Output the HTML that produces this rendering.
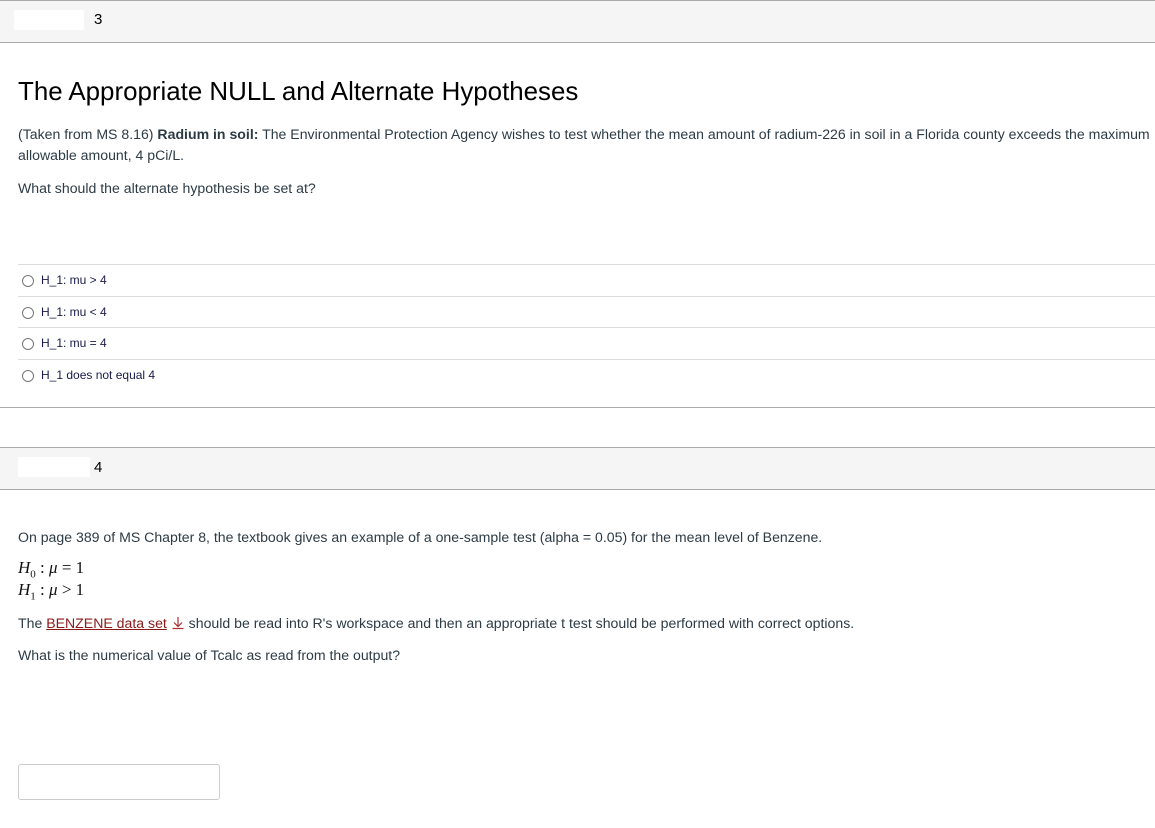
<!DOCTYPE html>
<html><head><meta charset="utf-8"><style>
body{margin:0;width:1155px;height:828px;background:#fff;font-family:"Liberation Sans",sans-serif;color:#2d3b45;position:relative;overflow:hidden}
.a{position:absolute;white-space:nowrap}
.hdr{position:absolute;left:0;width:1155px;height:41px;background:#f5f5f5;border-top:1px solid #aaa;border-bottom:1px solid #aaa}
.p{font-size:14.1px;color:#2d3b45}
.opt{position:absolute;left:18px;width:1137px;border-top:1px solid #ddd;height:31px}
.opt span.r{position:absolute;left:4px;top:10px;width:10px;height:10px;border:1px solid #777;border-radius:50%}
.opt span.t{position:absolute;left:23px;top:8px;font-size:12px;color:#1a1a4a}
.m{font-family:"Liberation Serif",serif;font-size:17px;color:#111}
</style></head><body>
<div class="hdr" style="top:0"></div>
<div class="a" style="left:14px;top:10px;width:70px;height:20px;background:#fff"></div>
<div class="a" style="left:94px;top:11px;font-size:15px;color:#000">3</div>
<div class="a" style="left:18px;top:78px;font-size:25.9px;color:#000">The Appropriate NULL and Alternate Hypotheses</div>
<div class="a p" style="left:18px;top:126px">(Taken from MS 8.16) <b>Radium in soil:</b> The Environmental Protection Agency wishes to test whether the mean amount of radium-226 in soil in a Florida county exceeds the maximum</div>
<div class="a p" style="left:18px;top:147px">allowable amount, 4 pCi/L.</div>
<div class="a p" style="left:18px;top:180px">What should the alternate hypothesis be set at?</div>
<div class="opt" style="top:264px"><span class="r"></span><span class="t">H_1: mu &gt; 4</span></div>
<div class="opt" style="top:296px"><span class="r"></span><span class="t">H_1: mu &lt; 4</span></div>
<div class="opt" style="top:327px"><span class="r"></span><span class="t">H_1: mu = 4</span></div>
<div class="opt" style="top:359px"><span class="r"></span><span class="t">H_1 does not equal 4</span></div>
<div class="a" style="left:0;top:407px;width:1155px;border-top:1px solid #aaa"></div>
<div class="hdr" style="top:447px"></div>
<div class="a" style="left:18px;top:457px;width:72px;height:20px;background:#fff"></div>
<div class="a" style="left:94px;top:459px;font-size:15px;color:#000">4</div>
<div class="a p" style="left:18px;top:529px">On page 389 of MS Chapter 8, the textbook gives an example of a one-sample test (alpha = 0.05) for the mean level of Benzene.</div>
<div class="a m" style="left:18px;top:558px"><i>H</i><sub style="font-size:11px">0</sub> : <i>μ</i> = 1</div>
<div class="a m" style="left:18px;top:580px"><i>H</i><sub style="font-size:11px">1</sub> : <i>μ</i> &gt; 1</div>
<div class="a p" style="left:18px;top:615px">The <u style="color:#8b1a1a">BENZENE data set</u> <svg width="14" height="14" viewBox="0 0 14 14" style="vertical-align:-2px"><path d="M7 1V10M3 6.5L7 10.5L11 6.5M1.5 12.5H12.5" fill="none" stroke="#b03030" stroke-width="1.2"/></svg> should be read into R's workspace and then an appropriate t test should be performed with correct options.</div>
<div class="a p" style="left:18px;top:647px">What is the numerical value of Tcalc as read from the output?</div>
<div class="a" style="left:18px;top:764px;width:200px;height:34px;border:1px solid #ccc;border-radius:3px"></div>
</body></html>
